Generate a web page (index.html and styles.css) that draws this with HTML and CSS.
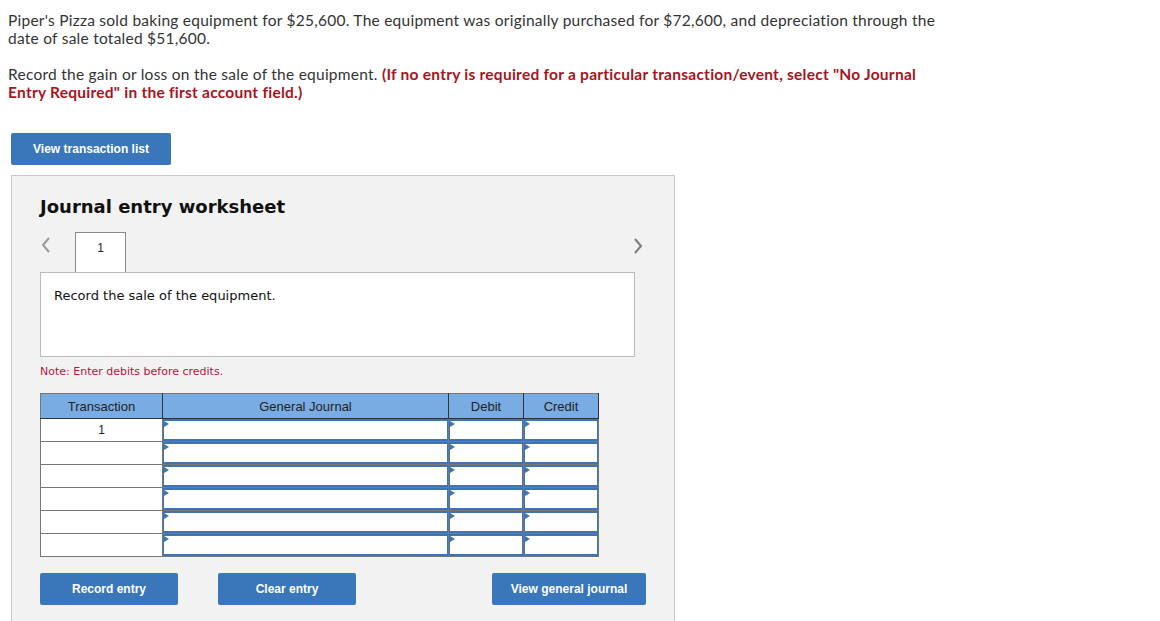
FILE: index.html
```html
<!DOCTYPE html>
<html>
<head>
<meta charset="utf-8">
<link rel="stylesheet" href="styles.css">
</head>
<body>
<div class="question">
  <p class="q-text">Piper's Pizza sold baking equipment for $25,600. The equipment was originally purchased for $72,600, and depreciation through the date of sale totaled $51,600.</p>
  <p class="q-text q-instr">Record the gain or loss on the sale of the equipment. <strong class="q-warn">(If no entry is required for a particular transaction/event, select "No Journal Entry Required" in the first account field.)</strong></p>
</div>
<button class="btn btn-top">View transaction list</button>
<div class="panel">
  <h2 class="panel-title">Journal entry worksheet</h2>
  <div class="tabs">
    <span class="chev chev-left"><svg width="12" height="18" viewBox="0 0 12 18"><polyline points="9,2 3,9 9,16" fill="none" stroke="#9a9a9a" stroke-width="2"/></svg></span>
    <div class="tab">1</div>
    <span class="chev chev-right"><svg width="12" height="18" viewBox="0 0 12 18"><polyline points="3,2 9,9 3,16" fill="none" stroke="#7a7a7a" stroke-width="2"/></svg></span>
  </div>
  <div class="desc">Record the sale of the equipment.</div>
  <div class="note">Note: Enter debits before credits.</div>
  <table class="journal">
    <colgroup><col class="c-tr"><col class="c-gj"><col class="c-amt"><col class="c-amt"></colgroup>
    <thead>
      <tr><th>Transaction</th><th>General Journal</th><th>Debit</th><th>Credit</th></tr>
    </thead>
    <tbody>
      <tr><td class="tr-cell">1</td><td class="in-cell"><div class="inp"></div></td><td class="in-cell"><div class="inp"></div></td><td class="in-cell"><div class="inp"></div></td></tr>
      <tr><td class="tr-cell"></td><td class="in-cell"><div class="inp"></div></td><td class="in-cell"><div class="inp"></div></td><td class="in-cell"><div class="inp"></div></td></tr>
      <tr><td class="tr-cell"></td><td class="in-cell"><div class="inp"></div></td><td class="in-cell"><div class="inp"></div></td><td class="in-cell"><div class="inp"></div></td></tr>
      <tr><td class="tr-cell"></td><td class="in-cell"><div class="inp"></div></td><td class="in-cell"><div class="inp"></div></td><td class="in-cell"><div class="inp"></div></td></tr>
      <tr><td class="tr-cell"></td><td class="in-cell"><div class="inp"></div></td><td class="in-cell"><div class="inp"></div></td><td class="in-cell"><div class="inp"></div></td></tr>
      <tr><td class="tr-cell"></td><td class="in-cell"><div class="inp"></div></td><td class="in-cell"><div class="inp"></div></td><td class="in-cell"><div class="inp"></div></td></tr>
    </tbody>
  </table>
  <div class="actions">
    <button class="btn btn-act">Record entry</button>
    <button class="btn btn-act btn-clear">Clear entry</button>
    <button class="btn btn-view">View general journal</button>
  </div>
</div>
</body>
</html>
```

FILE: styles.css
```css
html, body {
  margin: 0;
  padding: 0;
  background: #fff;
}
body {
  padding: 11px 8px 0 8px;
  font-family: "Lato", "Liberation Sans", sans-serif;
}
.question {
  width: 940px;
}
.q-text {
  margin: 0;
  font-size: 15.5px;
  letter-spacing: 0.25px;
  line-height: 18px;
  color: #333;
}
.q-instr {
  margin-top: 18px;
}
.q-warn {
  color: #a8141c;
  font-weight: 700;
  letter-spacing: 0.25px;
}
.btn {
  border: 0;
  border-radius: 2px;
  background: #3a76ba;
  color: #fff;
  font-family: "Liberation Sans", Arial, sans-serif;
  font-weight: 700;
  font-size: 12px;
  height: 32px;
  padding: 0;
  cursor: pointer;
}
.btn-top {
  display: block;
  margin: 32px 0 0 3px;
  width: 160px;
}
.panel {
  margin: 10px 0 0 3px;
  width: 664px;
  height: 460px;
  box-sizing: border-box;
  background: #f2f2f2;
  border: 1px solid #c8c8c8;
  padding: 20px 0 0 28px;
}
.panel-title {
  margin: 0;
  font-family: "DejaVu Sans", Verdana, sans-serif;
  font-weight: 700;
  font-size: 18px;
  line-height: 21px;
  color: #111;
}
.tabs {
  margin-top: 15px;
  width: 595px;
  height: 40px;
  display: flex;
  align-items: stretch;
  position: relative;
}
.chev {
  display: flex;
  align-items: flex-start;
  padding-top: 4px;
}
.chev-left {
  width: 35px;
}
.chev-right {
  position: absolute;
  right: -9px;
  top: 1px;
}
.tab {
  width: 51px;
  height: 40px;
  box-sizing: border-box;
  background: #fff;
  border: 1px solid #888;
  border-bottom: 0;
  margin-bottom: -1px;
  position: relative;
  z-index: 1;
  text-align: center;
  font-family: "Liberation Sans", Arial, sans-serif;
  font-size: 12px;
  line-height: 30px;
  color: #222;
}
.desc {
  width: 595px;
  height: 85px;
  box-sizing: border-box;
  background: #fff;
  border: 1px solid #bbb;
  padding: 15px 0 0 13px;
  font-family: "DejaVu Sans", Verdana, sans-serif;
  font-size: 13px;
  line-height: 16px;
  color: #111;
}
.note {
  margin-top: 8px;
  font-family: "DejaVu Sans", Verdana, sans-serif;
  font-size: 11px;
  line-height: 14px;
  color: #b8143c;
}
.journal {
  margin-top: 14px;
  border-collapse: collapse;
  width: 558px;
  table-layout: fixed;
  font-family: "Liberation Sans", Arial, sans-serif;
  font-size: 13px;
}
.c-tr { width: 122px; }
.c-gj { width: 286px; }
.c-amt { width: 75px; }
.journal th {
  background: #79ace3;
  border: 1px solid #333;
  border-top-color: #777;
  border-left-color: #777;
  height: 24px;
  padding: 0;
  font-weight: 400;
  color: #222;
  text-align: center;
}
.journal td {
  border: 1px solid #777;
  height: 22px;
  padding: 0;
  background: #fff;
}
.tr-cell {
  text-align: center;
  font-size: 12px;
  color: #222;
  vertical-align: middle;
}
.in-cell {
  vertical-align: top;
}
.inp {
  position: relative;
  height: 22px;
  box-sizing: border-box;
  border: 1px solid #3d74b8;
  border-top-width: 2px;
  border-bottom-width: 2px;
}
.inp::before {
  content: "";
  position: absolute;
  left: 0;
  top: 0;
  border-left: 5px solid #3d74b8;
  border-top: 3px solid transparent;
  border-bottom: 3px solid transparent;
}
.actions {
  margin-top: 16px;
  display: flex;
  width: 606px;
}
.btn-act {
  width: 138px;
}
.btn-clear {
  margin-left: 40px;
}
.btn-view {
  margin-left: auto;
  width: 154px;
}
```
